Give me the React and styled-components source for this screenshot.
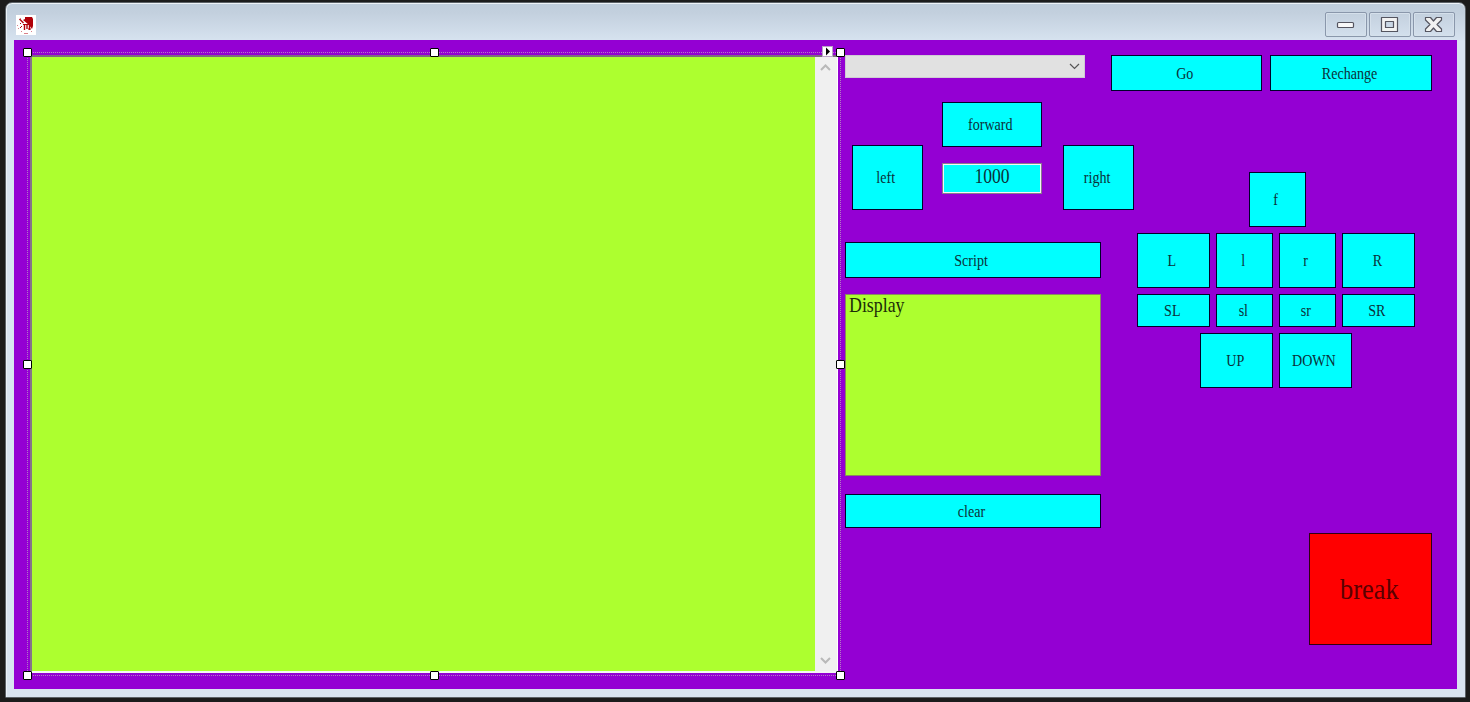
import React from "react";
import styled, { createGlobalStyle } from "styled-components";

const Global = createGlobalStyle`
  *{box-sizing:border-box;}
  body{margin:0;background:#1c1c1c;overflow:hidden;}
`;
const Desktop = styled.div`
  height:702px;padding:2px 4px 4px 5px;background:#1c1c1c;
  font-family:"Liberation Serif","Noto Sans CJK TC",serif;color:#101010;
`;
const Window = styled.div`
  height:696px;display:flex;flex-direction:column;
  border:1px solid #5c6268;border-radius:7px 7px 1px 1px;
  box-shadow:inset 0 1px 0 #eef3f8,inset 1px 0 0 #eaf1f8;
  background:linear-gradient(#bfcddb 0,#c3d0de 10px,#d6e2ef 37px,#d9e4f1 38px);
  padding:0 8px 8px;
`;
const TitleBar = styled.div`
  height:37px;flex:none;display:flex;justify-content:space-between;
  padding:12px 2px 0;
`;
const Controls = styled.div`
  display:flex;gap:2px;margin-top:-3px;
`;
const Control = styled.div`
  width:42px;height:25px;border:1px solid #8a97ab;border-radius:2px;
  box-shadow:inset 0 0 0 1px #d5e0eb;
  display:flex;align-items:center;justify-content:center;
`;
const Client = styled.div`
  flex:1;background:#9400d3;display:flex;padding:12px 25px 0 13px;gap:5px;
`;
const Selection = styled.div`
  position:relative;width:813px;height:624px;padding:3px 2px 3px 3px;
`;
const Outline = styled.svg`
  position:absolute;inset:0;
`;
const Handle = styled.i`
  position:absolute;width:9px;height:9px;background:#fff;border:1px solid #000;border-radius:1px;
  left:${p => p.$x}px;top:${p => p.$y}px;
`;
const SmartTag = styled.div`
  position:absolute;left:795px;top:-6px;width:11px;height:11px;background:#fff;
  border:1px solid #b9a3c8;display:flex;
`;
const TextArea = styled.div`
  height:618px;display:flex;background:#adff2f;
  border-style:solid;border-width:2px 1px 2px 2px;
  border-color:#7d6a80 #fff #f4f4f4 #85748a;
`;
const ScrollBar = styled.div`
  width:22px;margin-left:auto;background:#f0f0f0;
  display:flex;flex-direction:column;justify-content:space-between;align-items:center;
  padding:6px 2px 6px 0;
`;
const Side = styled.div`
  flex:1;display:flex;flex-direction:column;padding-top:3px;
`;
const TopRow = styled.div`
  display:flex;align-items:flex-start;
`;
const Actions = styled.div`
  display:flex;gap:8px;
`;
const Combo = styled.div`
  width:240px;height:23px;margin-right:26px;background:#e1e1e1;border:1px solid #cfcbd3;
  display:flex;align-items:center;justify-content:flex-end;padding-right:4px;
`;
const Key = styled.div`
  width:${p => p.$w}px;height:${p => p.$h}px;flex:none;
  background:${p => (p.$danger ? "#ff0000" : "#00ffff")};
  border:1px solid ${p => (p.$danger ? "#300010" : "#00002a")};
  display:flex;align-items:center;justify-content:center;
  padding:${p => (p.$danger ? "0 2px 0 0" : "1px 3px 0 0")};
  font-size:${p => (p.$danger ? 30 : 16)}px;line-height:1;
  color:${p => (p.$danger ? "#5a0000" : "#0c3038")};
`;
const Narrow = styled.span`
  display:block;white-space:nowrap;transform:scaleX(${p => p.$s || 0.88});
  transform-origin:${p => p.$o || "center"};
`;
const Body = styled.div`
  display:flex;flex:1;
`;
const Middle = styled.div`
  width:289px;padding-top:11px;display:flex;flex-direction:column;
`;
const Pad = styled.div`
  display:flex;justify-content:space-between;padding-left:7px;height:140px;
`;
const PadCenter = styled.div`
  display:flex;flex-direction:column;gap:16px;margin-left:-2px;
`;
const PadSide = styled.div`
  padding-top:43px;
`;
const NumberBox = styled.div`
  width:100px;height:31px;background:#00ffff;border:1px solid #8a7a90;
  box-shadow:inset 0 0 0 1px #f4f4f4;color:#0c3038;
  display:flex;justify-content:center;padding-top:1px;font-size:22px;line-height:22px;
`;
const Display = styled.div`
  width:256px;height:182px;margin:16px 0 18px;background:#adff2f;border:1px solid #8a8a60;
  padding:0 3px;font-size:21px;line-height:21px;color:#1c2c08;
`;
const Right = styled.div`
  flex:1;display:flex;flex-direction:column;padding:81px 0 0 3px;
`;
const Rows = styled.div`
  width:278px;display:flex;flex-direction:column;gap:6px;
`;
const Row = styled.div`
  display:flex;justify-content:center;gap:6px;padding-left:${p => p.$shift || 0}px;
`;
const BreakSlot = styled.div`
  display:flex;justify-content:flex-end;margin-top:145px;
`;

function Button({ label, w, h, danger }) {
  return (
    <Key $w={w} $h={h} $danger={danger}>
      <Narrow>{label}</Narrow>
    </Key>
  );
}

function Chevron({ up, color = "#b9b9b9", size = 11, width = 2 }) {
  return (
    <svg width={size} height="9" viewBox="0 0 11 9">
      <path d={up ? "M1 7 5.5 2.5 10 7" : "M1 2 5.5 6.5 10 2"} fill="none" stroke={color} strokeWidth={width} />
    </svg>
  );
}

function Logo() {
  return (
    <svg width="20" height="20" viewBox="0 0 20 20">
      <path fill="#fff" d="M0 0h20v20H0z" />
      <path fill="#b00008" d="M9 2h7l1 2v7l-1 3-3-4-6-5 2-1z" />
      <path stroke="#b00008" strokeWidth="1.4" d="m3.500 4 4 4M8.500 9v6M11 9v5M13.500 10v5" fill="none" />
      <path stroke="#b00008" d="M7 9.500h6M4 8l1 1M6 11l-2 2M12 14h3" fill="none" />
      <path stroke="#d9808a" d="M1 10.500h1M2 13.500h1M5 16.500h1M8 18.500h4M15 16.500h1M4 3.500h1" />
    </svg>
  );
}

const HANDLES = [[-4, -4], [403, -4], [809, -4], [-4, 308], [809, 308], [-4, 619], [403, 619], [809, 619]];

export default function App() {
  return (
    <Desktop>
      <Global />
      <Window>
        <TitleBar>
          <Logo />
          <Controls>
            <Control>
              <svg width="20" height="21" viewBox="0 0 20 21">
                <rect x="1.500" y="8.500" width="16" height="5" rx="1" fill="#f8f8f8" stroke="#555560" strokeWidth="1.200" />
              </svg>
            </Control>
            <Control>
              <svg width="20" height="21" viewBox="0 0 20 21">
                <path d="M1.500 3.500h16v14h-16zM5.500 7.500v6h8v-6z" fillRule="evenodd" fill="#f2f2f2" stroke="#555560" strokeWidth="1.200" strokeLinejoin="round" />
              </svg>
            </Control>
            <Control>
              <svg width="20" height="21" viewBox="0 0 20 21">
                <path d="M1.500 3.500h5l3 3.500 3-3.500h5V6l-4.500 4.500 4.500 4.500v2.500h-5l-3-3.500-3 3.500h-5V15L6 10.500 1.500 6z" fill="#f2f2f2" stroke="#555560" strokeWidth="1.200" strokeLinejoin="round" />
              </svg>
            </Control>
          </Controls>
        </TitleBar>
        <Client>
          <Selection>
            <Outline width="814" height="624" shapeRendering="crispEdges">
              <path d="M0 .5H813M0 623.500H813M.5 0V624M813.500 0V624" fill="none" stroke="#b27cc4" strokeDasharray="1 1" />
            </Outline>
            <TextArea>
              <ScrollBar>
                <Chevron up />
                <Chevron />
              </ScrollBar>
            </TextArea>
            {HANDLES.map(([x, y]) => (
              <Handle key={`${x}:${y}`} $x={x} $y={y} />
            ))}
            <SmartTag>
              <svg width="9" height="9" viewBox="0 0 9 9">
                <path d="M3 .5v8l4-4z" fill="#000" />
              </svg>
            </SmartTag>
          </Selection>
          <Side>
            <TopRow>
              <Combo>
                <Chevron color="#555" width={1.2} />
              </Combo>
              <Actions>
                <Button label="Go" w={151} h={36} />
                <Button label="Rechange" w={162} h={36} />
              </Actions>
            </TopRow>
            <Body>
              <Middle>
                <Pad>
                  <PadSide><Button label="left" w={71} h={65} /></PadSide>
                  <PadCenter>
                    <Button label="forward" w={100} h={45} />
                    <NumberBox><Narrow $s={0.8}>1000</Narrow></NumberBox>
                  </PadCenter>
                  <PadSide><Button label="right" w={71} h={65} /></PadSide>
                </Pad>
                <Button label="Script" w={256} h={36} />
                <Display><Narrow $s={0.85} $o="left">Display</Narrow></Display>
                <Button label="clear" w={256} h={34} />
              </Middle>
              <Right>
                <Rows>
                  <Row $shift={2}><Button label="f" w={57} h={55} /></Row>
                  <Row>
                    <Button label="L" w={73} h={55} />
                    <Button label="l" w={57} h={55} />
                    <Button label="r" w={57} h={55} />
                    <Button label="R" w={73} h={55} />
                  </Row>
                  <Row>
                    <Button label="SL" w={73} h={33} />
                    <Button label="sl" w={57} h={33} />
                    <Button label="sr" w={57} h={33} />
                    <Button label="SR" w={73} h={33} />
                  </Row>
                  <Row>
                    <Button label="UP" w={73} h={55} />
                    <Button label="DOWN" w={73} h={55} />
                  </Row>
                </Rows>
                <BreakSlot>
                  <Button label="break" w={123} h={112} danger />
                </BreakSlot>
              </Right>
            </Body>
          </Side>
        </Client>
      </Window>
    </Desktop>
  );
}
